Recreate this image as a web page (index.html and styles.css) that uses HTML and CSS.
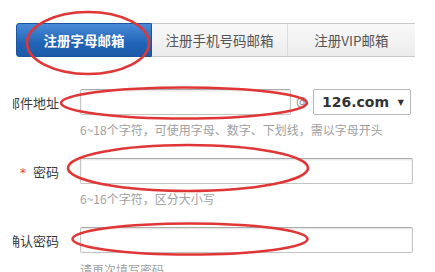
FILE: index.html
```html
<!DOCTYPE html>
<html lang="zh">
<head>
<meta charset="utf-8">
<link rel="stylesheet" href="styles.css">
</head>
<body>
<div class="page">
  <div class="tabs">
    <div class="tab active">注册字母邮箱</div>
    <div class="tab">注册手机号码邮箱</div>
    <div class="tab last">注册VIP邮箱</div>
  </div>
  <form class="form">
    <div class="row">
      <div class="field">
        <div class="label"><span>邮件地址</span></div>
        <div class="input short"></div>
        <span class="at">@</span>
        <div class="select"><span>126.com</span><span class="caret">▼</span></div>
      </div>
      <div class="hint">6~18个字符，可使用字母、数字、下划线，需以字母开头</div>
    </div>
    <div class="row">
      <div class="field">
        <div class="label"><span><b class="star">*</b>密码</span></div>
        <div class="input"></div>
      </div>
      <div class="hint">6~16个字符，区分大小写</div>
    </div>
    <div class="row">
      <div class="field">
        <div class="label"><span>确认密码</span></div>
        <div class="input"></div>
      </div>
      <div class="hint low">请再次填写密码</div>
    </div>
  </form>
  <svg class="marks" width="435" height="272" viewBox="0 0 435 272">
    <ellipse cx="88" cy="43" rx="61" ry="31"/>
    <ellipse cx="184" cy="103" rx="123" ry="15.5"/>
    <ellipse cx="188" cy="168" rx="120" ry="23"/>
    <ellipse cx="190" cy="239" rx="117.5" ry="15.5"/>
  </svg>
</div>
</body>
</html>
```
FILE: styles.css
```css
html, body {
  margin: 0;
  padding: 0;
  background: #fff;
}
.page {
  position: relative;
  width: 435px;
  height: 272px;
  overflow: hidden;
  font-family: "Noto Sans CJK SC", "DejaVu Sans", sans-serif;
}
.tabs {
  display: flex;
  margin: 23px 0 0 16px;
  width: 399px;
  height: 34px;
}
.tab {
  box-sizing: border-box;
  width: 136px;
  height: 34px;
  display: flex;
  align-items: center;
  justify-content: center;
  font-size: 13.5px;
  color: #555;
  background: linear-gradient(#f9f9f9, #ececec);
  border-top: 1px solid #c8c8c8;
  border-bottom: 1px solid #c8c8c8;
  border-right: 1px solid #dcdcdc;
}
.tab.last {
  width: 127px;
  border-right: none;
}
.tab.active {
  color: #fff;
  font-weight: bold;
  background: linear-gradient(#4a8bd8, #2163b6 60%, #1c5aa8);
  border: 1px solid #1b55a0;
  border-radius: 3px 0 0 3px;
}
.form {
  margin-top: 32px;
}
.row {
  margin-bottom: 20px;
}
.field {
  display: flex;
  align-items: center;
  height: 26px;
}
.label {
  box-sizing: border-box;
  margin-left: 13px;
  width: 46px;
  margin-right: 21px;
  display: flex;
  justify-content: flex-end;
  overflow: hidden;
  white-space: nowrap;
  font-size: 13px;
  color: #3a3a3a;
}
.star {
  color: #e23b3b;
  font-weight: normal;
  font-family: "DejaVu Sans", sans-serif;
  font-size: 12px;
  margin-right: 7px;
}
.input {
  box-sizing: border-box;
  width: 333px;
  height: 26px;
  border: 1px solid #c4c4c4;
  border-top-color: #aaa;
  border-radius: 2px;
  box-shadow: inset 0 1px 2px rgba(0,0,0,0.12);
  background: #fff;
}
.input.short {
  width: 211px;
}
.at {
  width: 22px;
  text-align: center;
  font-size: 12px;
  color: #888;
  font-family: "DejaVu Sans", sans-serif;
}
.select {
  box-sizing: border-box;
  width: 98px;
  height: 26px;
  border: 1px solid #b8b8b8;
  border-radius: 2px;
  display: flex;
  align-items: center;
  justify-content: space-between;
  padding: 0 6px 0 8px;
  font-family: "DejaVu Sans", sans-serif;
  font-weight: bold;
  font-size: 14px;
  color: #333;
}
.caret {
  font-size: 8px;
  color: #333;
}
.hint {
  margin: 7px 0 0 80px;
  font-size: 12px;
  line-height: 16px;
  color: #a0a0a0;
  white-space: nowrap;
}
.hint.low {
  margin-top: 9px;
}
.marks {
  position: absolute;
  left: 0;
  top: 0;
  pointer-events: none;
}
.marks ellipse {
  fill: none;
  stroke: #e03636;
  stroke-width: 2.6;
}
```
